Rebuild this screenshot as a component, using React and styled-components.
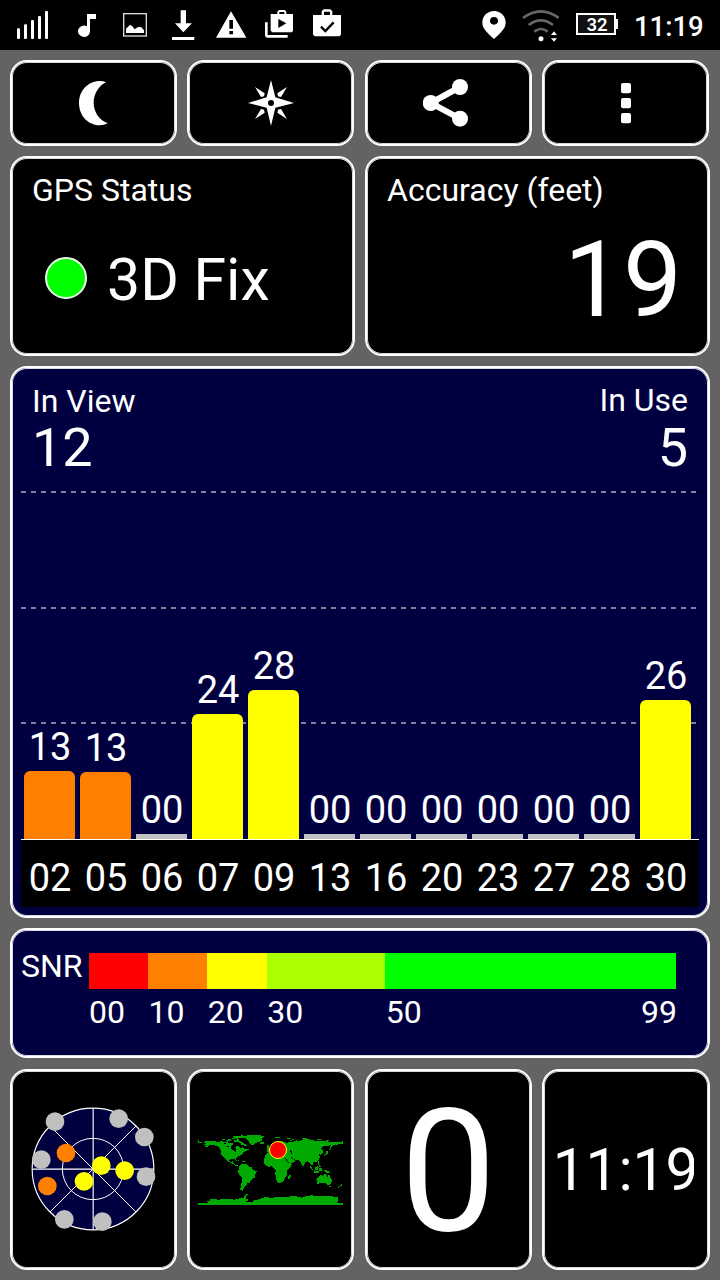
import React from "react";
import styled, { createGlobalStyle } from "styled-components";

const GlobalStyle = createGlobalStyle`
  *, *::before, *::after { box-sizing: border-box; }
  body {
    margin: 0;
    background: #636363;
    color: #fff;
    font-family: Roboto, "Liberation Sans", sans-serif;
  }
`;

const Screen = styled.div`
  display: flex;
  flex-direction: column;
  width: 720px;
  height: 1280px;
  overflow: hidden;
  background: #636363;
`;

/* ---------- status bar ---------- */

const StatusBar = styled.header`
  display: flex;
  height: 50px;
  padding-left: 17px;
  background: #000;
`;

const Glyph = styled.svg`
  flex: none;
  display: block;
  height: 50px;
  margin-left: ${(p) => p.$gap || 0}px;
  fill: #fff;
`;

/* Status glyphs are drawn on a grid of three units per pixel. */
function StatusIcon({ x, w, gap, children }) {
  return (
    <Glyph $gap={gap} width={w / 3} viewBox={`${x} 0 ${w} 150`}>
      {children}
    </Glyph>
  );
}

const Battery = styled.div`
  position: relative;
  width: 40px;
  height: 22px;
  margin: 13px 0 0 17px;
  border: 2px solid #fff;
  background: #111;
  font-size: 18.5px;
  font-weight: 600;
  line-height: 20px;
  text-align: center;
  padding-left: 2px;

  &::after {
    content: "";
    position: absolute;
    left: 38px;
    top: 4px;
    width: 2px;
    height: 10px;
    background: #fff;
  }
`;

const StatusClock = styled.span`
  margin-left: 18px;
  font-size: 27.5px;
  font-weight: 500;
  line-height: 53px;
`;

/* ---------- panels ---------- */

const Body = styled.main`
  display: flex;
  flex-direction: column;
  gap: 10px;
  padding: 10px 10px 0;
`;

const Panel = styled.section`
  border: 2px solid #fff;
  border-radius: 17px;
  background: ${(p) => (p.$navy ? "#000040" : "#000")};
  box-shadow: inset 0 0 0 1px rgba(255, 255, 255, 0.85);
`;

const QuadRow = styled.div`
  display: grid;
  grid-template-columns: 167px 167px 167px ${(p) => p.$last}px;
  column-gap: 10.4px;
  height: ${(p) => p.$height}px;
  margin-top: ${(p) => p.$top || 0}px;
`;

const Tile = styled(Panel)`
  display: flex;
  align-items: center;
  justify-content: center;
  overflow: hidden;
`;

const ToolIcon = styled.svg`
  display: block;
  width: 50px;
  height: 50px;
  fill: #fff;
`;

const HalfRow = styled.div`
  display: grid;
  grid-template-columns: 345px 345px;
  column-gap: 10px;
  height: 200px;
`;

const InfoPanel = styled(Panel)`
  padding: 13px 20px 0;
`;

const Label = styled.div`
  font-size: 32px;
  line-height: 38px;
  white-space: nowrap;
`;

const FixRow = styled.div`
  display: flex;
  gap: 20px;
  margin: 36px 0 0 13px;
  font-size: 59px;
  line-height: 70px;
`;

const FixDot = styled.i`
  width: 42px;
  height: 42px;
  margin-top: 12px;
  border: 2px solid #e9ffe9;
  border-radius: 50%;
  background: #0f0;
`;

const Accuracy = styled.div`
  padding-right: 6px;
  margin-top: 12px;
  font-size: 105px;
  line-height: 120px;
  text-align: right;
`;

/* ---------- satellite chart ---------- */

const ChartPanel = styled(Panel)`
  height: 552px;
  padding: 0 9px;
`;

const ChartHead = styled.div`
  display: flex;
  justify-content: space-between;
  height: 123px;
  padding: 14px 11px 0 11px;
`;

const Stat = styled.div`
  text-align: ${(p) => p.$align};
  margin-top: ${(p) => p.$shift || 0}px;
`;

const StatValue = styled.div`
  margin-top: ${(p) => p.$drop || 0}px;
  font-size: 54px;
  line-height: 56px;
`;

const Plot = styled.div`
  position: relative;
  display: flex;
  align-items: flex-end;
  gap: 5px;
  width: 678px;
  height: 349px;
  padding-left: 3px;
  border-bottom: 1px solid #fff;
`;

const GridLine = styled.div`
  position: absolute;
  left: 0;
  top: ${(p) => p.$top}px;
  width: 675px;
  height: 2px;
  background: repeating-linear-gradient(90deg, #8080a0 0 5px, transparent 5px 10px);
`;

const Satellite = styled.div`
  position: relative;
  width: 51px;
  font-size: 38px;
  line-height: 40px;
  text-align: center;
  padding-left: 1px;
`;

const Bar = styled.div`
  margin: 4px 0 0 -1px;
  height: ${(p) => p.$height}px;
  border-radius: ${(p) => (p.$height > 10 ? "6px 6px 0 0" : 0)};
  background: ${(p) => p.$color};
`;

const Ids = styled.div`
  display: flex;
  gap: 5px;
  width: 678px;
  height: 67px;
  padding-left: 3px;
  background: #000;
`;

const SatId = styled.span`
  width: 51px;
  padding-left: 1px;
  font-size: 38px;
  line-height: 76px;
  text-align: center;
`;

/* ---------- SNR scale ---------- */

const SnrPanel = styled(Panel)`
  display: flex;
  height: 130px;
  padding: 17px 0 0 9px;
`;

const SnrScale = styled.div`
  width: 587.5px;
  margin: 6px 0 0 6px;
`;

const Bands = styled.div`
  display: grid;
  grid-template-columns: 59.4px 59.4px 59.4px 118px 1fr;
  height: 36px;
`;

const Band = styled.div`
  background: ${(p) => p.$color};
`;

const Ticks = styled(Bands)`
  height: 46px;
  font-size: 32px;
  line-height: 46px;
`;

const Tick = styled.span`
  display: flex;
  justify-content: space-between;
  padding-left: ${(p) => p.$pad}px;
  margin-right: -1px;
`;

/* ---------- bottom tiles ---------- */

const SkyBox = styled.div`
  display: flex;
  margin: 0 1px 1px 0;
`;

const Speed = styled.span`
  margin-top: 5px;
  font-size: 171px;
  line-height: 196px;
`;

const ClockBox = styled.div`
  width: 141px;
  margin-left: -6px;
  overflow: hidden;
  font-size: 58.5px;
  line-height: 70px;
  white-space: nowrap;
`;

const SATELLITES = [
  { id: "02", snr: "13", height: 68, color: "#ff8000" },
  { id: "05", snr: "13", height: 67, color: "#ff8000" },
  { id: "06", snr: "00", height: 5, color: "#c0c0c0" },
  { id: "07", snr: "24", height: 125, color: "#ffff00" },
  { id: "09", snr: "28", height: 149, color: "#ffff00" },
  { id: "13", snr: "00", height: 5, color: "#c0c0c0" },
  { id: "16", snr: "00", height: 5, color: "#c0c0c0" },
  { id: "20", snr: "00", height: 5, color: "#c0c0c0" },
  { id: "23", snr: "00", height: 5, color: "#c0c0c0" },
  { id: "27", snr: "00", height: 5, color: "#c0c0c0" },
  { id: "28", snr: "00", height: 5, color: "#c0c0c0" },
  { id: "30", snr: "26", height: 139, color: "#ffff00" },
];

const SKY_DOTS = [
  [136, 96, "#c0c0c0"],
  [327, 87, "#c0c0c0"],
  [404, 142, "#c0c0c0"],
  [95, 210, "#c0c0c0"],
  [409, 261, "#c0c0c0"],
  [164, 389, "#c0c0c0"],
  [278, 396, "#c0c0c0"],
  [169, 190, "#ff8000"],
  [113, 289, "#ff8000"],
  [275, 228, "#ffff00"],
  [345, 243, "#ffff00"],
  [223, 275, "#ffff00"],
];

function SkyView() {
  return (
    <svg width="126" height="126" viewBox="61 49 378 378">
      <circle cx="250" cy="238" r="182.5" fill="#000040" stroke="#fff" strokeWidth="3.4" />
      <g fill="none" stroke="#fff" strokeWidth="3">
        <circle cx="250" cy="238" r="92" />
        <path d="M250.5 56V420M68 238.5H432" strokeWidth="3.4" />
        <path d="M121 367L379 109M121 109L379 367" strokeWidth="3" />
      </g>
      {SKY_DOTS.map(([cx, cy, fill]) => (
        <circle key={`${cx}-${cy}`} cx={cx} cy={cy} r="28" fill={fill} />
      ))}
    </svg>
  );
}

function WorldMap() {
  return (
    <svg width="145" height="70" viewBox="24 45 435 210">
      <g fill="#00aa00" shapeRendering="crispEdges">
        <path d="M24 60L28 62V65H36V69H24Z" />
        <path d="M42 67L48 63H60L66 62L82 65L96 64L112 67L120 70L128 68V75L122 80L125 88L132 91L137 97L139 90L136 84L138 78L148 80L152 86L158 82L166 88L176 86V90L166 94L160 97L158 103L150 107L144 110L138 116L141 123L137 122L133 117L122 116L117 120L120 126L128 124L130 130L137 134L144 137L138 138L126 130L115 126L110 121L100 112L94 104L93 94L88 84L82 77L70 76L60 74L52 80L42 81L50 76L42 73H47V69Z" />
        <path d="M96 56H106V60H96ZM108 60L122 57L124 62L112 65ZM126 54H134V58H126ZM120 51L140 48L157 46L160 49L150 52L142 57L132 52ZM136 59L148 58V63L156 65L166 73L172 78L164 80L158 74L150 76L154 71L142 66L132 67V62Z" />
        <path d="M142 52L160 48L180 45L212 46L222 49L216 56L217 63L208 65L198 68L191 75L187 76L180 71L176 64L170 56L158 53Z" />
        <path d="M210 67H221L223 70L218 73L210 70ZM140 120L150 122L155 124H148ZM156 124H164V127H156Z" />
        <path d="M148 137L156 132L170 133L178 140L186 143L188 148L200 153L198 160L194 166V173L184 179L180 187L172 190L169 197L163 200L164 205L158 207V212L151 209L152 198L155 186L156 172L149 165L144 155L147 148Z" />
        <path d="M228 102L236 99L258 98L264 104L284 108L289 121L297 132L306 133L302 142L292 152L291 165L285 174L280 185L270 189L262 187L258 174L256 161L257 152L252 144L246 139L234 140L226 134L221 127L222 118Z" />
        <path d="M302 164L304 168L298 178L294 176L295 168Z" />
        <path d="M232 97V91L240 90L237 84L244 80L256 74L254 68L264 64L274 62L284 66L292 69L296 65L305 66L314 64L318 61L329 64L340 58L352 56L365 60L380 63L396 62L410 64L430 66H446L459 64V71L451 73L438 74L426 78L423 87L418 91L419 82L424 76L412 77L398 80L393 86L400 91L399 99L393 104L386 102L390 110L387 119L379 125L368 126L369 135L363 136L359 129L353 122L345 128L341 137L336 137L332 125L325 121L312 118L316 124L305 130L297 133L291 124L286 112L282 107L268 105L258 98L244 98L238 102Z" />
        <path d="M232 76H238V84L242 89H232ZM256 51H270V54H256ZM292 54H302V57H292ZM300 62L309 57L316 56L304 63ZM336 53H351V57H336ZM382 56H392V59H382ZM408 59H416V62H408Z" />
        <path d="M411 90L414 98L411 104L402 108L406 102ZM384 124H388V134L394 140H388L384 132ZM359 137L366 144L372 151H367L360 143ZM372 151L388 155V158H372ZM374 144L383 137L387 143L382 151L376 150ZM388 145H396V153H388ZM400 149L412 152L423 159L410 158Z" />
        <path d="M379 176L386 172L392 166L400 167L404 162L410 164L413 171L417 162L421 172L426 180L424 190L417 196L410 193L404 188L393 189L383 192L380 186Z" />
        <path d="M454 192L456 196L450 200L444 205V201L450 198ZM417 198H422V201H417Z" />
        <path d="M24 255V249H54L50 243L58 243L62 237L88 239L108 236L132 239L148 235L160 234L168 223H174L167 230L170 237L178 240L168 245L184 247L194 241L210 237L222 232L250 233L266 230L294 231L308 227L325 230L334 233L348 228L366 226L390 229L420 228L443 232L445 244L440 248H459V255Z" />
      </g>
      <g fill="#000" shapeRendering="crispEdges">
        <path d="M299 89L304 91L307 101L303 102ZM284 114L287 113L296 128H293ZM302 109L311 116L308 118ZM102 70H108V73H102ZM112 77H118V80H112Z" />
      </g>
      <circle cx="264" cy="90" r="25.5" fill="#f00" stroke="#ff0" strokeWidth="3" />
    </svg>
  );
}

export default function App() {
  return (
    <Screen>
      <GlobalStyle />
      <StatusBar>
        <StatusIcon x={51} w={93}>
          <rect x="51" y="85" width="9" height="32" rx="3" />
          <rect x="72" y="73" width="9" height="44" rx="3" />
          <rect x="93" y="60" width="9" height="57" rx="3" />
          <rect x="114" y="48" width="9" height="69" rx="3" />
          <rect x="135" y="33" width="9" height="84" rx="3" />
        </StatusIcon>
        <StatusIcon x={234} w={54} gap={30}>
          <path d="M261 42H288V57H270V94A18 17 0 1 1 261 79Z" />
        </StatusIcon>
        <StatusIcon x={369} w={72} gap={27}>
          <rect x="371" y="41" width="68" height="67" fill="none" stroke="#ddd" strokeWidth="4" />
          <path d="M378 99V86L390 74L397 79L404 88L414 81L424 82L432 91V99Z" />
        </StatusIcon>
        <StatusIcon x={516} w={68} gap={25}>
          <path d="M542 31H558V70H576L550 97L525 70H542ZM516 111H583V120H516Z" />
        </StatusIcon>
        <StatusIcon x={647} w={91} gap={21}>
          <path fillRule="evenodd" d="M692 34L738 113H647ZM687 60V86H698V60ZM687 93V103H698V93Z" />
        </StatusIcon>
        <StatusIcon x={795} w={85} gap={19}>
          <path
            fillRule="evenodd"
            d="M812 42H832V35L837 30H854L859 35V42H880V92L875 97H817L812 92ZM838 42H853V36H838ZM835 57V84L859 70ZM795 67H803V105H863V113H800L795 108Z"
          />
        </StatusIcon>
        <StatusIcon x={939} w={85} gap={59 / 3}>
          <path
            fillRule="evenodd"
            d="M939 45H965V34L971 28H991L997 34V45H1023V104L1018 109H945L939 104ZM972 45H990V35H972Z"
          />
          <path d="M963 80L976 93L1001 67" fill="none" stroke="#000" strokeWidth="7" />
        </StatusIcon>
        <StatusIcon x={366} w={72} gap={421 / 3}>
          <path
            fillRule="evenodd"
            d="M402 33C382 33 367 48 367 68C367 87 384 99 402 117C420 99 437 87 437 68C437 48 422 33 402 33ZM402 51A12 11.5 0 1 1 402 74A12 11.5 0 1 1 402 51Z"
          />
        </StatusIcon>
        <StatusIcon x={486} w={112} gap={16}>
          <g fill="none" stroke="#666" strokeWidth="8">
            <path d="M489 54Q543 14 596 54" />
            <path d="M506 75Q543 47 579 75" />
            <path d="M523 95Q543 79 563 95" />
          </g>
          <circle cx="543" cy="116" r="7.5" />
          <path d="M582 94L591 105H573ZM573 115H591L582 125Z" />
        </StatusIcon>
        <Battery>32</Battery>
        <StatusClock>11:19</StatusClock>
      </StatusBar>

      <Body>
        <QuadRow $height={86} $last={167}>
          <Tile as="button">
            <ToolIcon viewBox="207 234 150 150">
              <path d="M300 243C264 243 237 272 237 309C237 347 264 376 300 376Q312 376 323 370C297 360 281 335 281 309C281 282 296 257 318 247Q310 243 300 243Z" />
            </ToolIcon>
          </Tile>
          <Tile as="button">
            <ToolIcon viewBox="738 234 150 150">
              <path
                fillRule="evenodd"
                d="M813 240L826 292L882 309L826 323L813 378L800 323L744 309L800 292ZM813 300A9 9 0 1 0 813 318A9 9 0 1 0 813 300Z"
              />
              <path d="M765 261L794 280L792 289L783 291ZM861 261L832 280L834 289L843 291ZM765 357L794 338L792 329L783 327ZM861 357L832 338L834 329L843 327Z" />
            </ToolIcon>
          </Tile>
          <Tile as="button">
            <ToolIcon viewBox="190 234 150 150">
              <path d="M301 261L213 309L301 356" fill="none" stroke="#fff" strokeWidth="18" />
              <circle cx="213" cy="309" r="24" />
              <circle cx="301" cy="261" r="24" />
              <circle cx="301" cy="356" r="24" />
            </ToolIcon>
          </Tile>
          <Tile as="button">
            <ToolIcon viewBox="723 234 150 150">
              <rect x="783" y="249" width="30" height="31" rx="6" />
              <rect x="783" y="294" width="30" height="31" rx="6" />
              <rect x="783" y="339" width="30" height="31" rx="6" />
            </ToolIcon>
          </Tile>
        </QuadRow>

        <HalfRow>
          <InfoPanel>
            <Label>GPS Status</Label>
            <FixRow>
              <FixDot />
              3D Fix
            </FixRow>
          </InfoPanel>
          <InfoPanel>
            <Label>Accuracy (feet)</Label>
            <Accuracy>19</Accuracy>
          </InfoPanel>
        </HalfRow>

        <ChartPanel $navy>
          <ChartHead>
            <Stat $align="left">
              <Label>In View</Label>
              <StatValue>12</StatValue>
            </Stat>
            <Stat $align="right" $shift={-1}>
              <Label>In Use</Label>
              <StatValue $drop={1}>5</StatValue>
            </Stat>
          </ChartHead>
          <Plot>
            <GridLine $top={0} />
            <GridLine $top={116} />
            <GridLine $top={231} />
            {SATELLITES.map((s) => (
              <Satellite key={s.id}>
                {s.snr}
                <Bar $height={s.height} $color={s.color} />
              </Satellite>
            ))}
          </Plot>
          <Ids>
            {SATELLITES.map((s) => (
              <SatId key={s.id}>{s.id}</SatId>
            ))}
          </Ids>
        </ChartPanel>

        <SnrPanel $navy>
          <Label>SNR</Label>
          <SnrScale>
            <Bands>
              <Band $color="#ff0000" />
              <Band $color="#ff8000" />
              <Band $color="#ffff00" />
              <Band $color="#aaff00" />
              <Band $color="#00ff00" />
            </Bands>
            <Ticks>
              <Tick $pad={0.5}>00</Tick>
              <Tick $pad={0.5}>10</Tick>
              <Tick $pad={0.5}>20</Tick>
              <Tick $pad={0.5}>30</Tick>
              <Tick $pad={1}>
                <span>50</span>
                <span>99</span>
              </Tick>
            </Ticks>
          </SnrScale>
        </SnrPanel>

        <QuadRow $height={201} $last={168} $top={1}>
          <Tile>
            <SkyBox>
              <SkyView />
            </SkyBox>
          </Tile>
          <Tile>
            <WorldMap />
          </Tile>
          <Tile>
            <Speed>0</Speed>
          </Tile>
          <Tile>
            <ClockBox>11:19</ClockBox>
          </Tile>
        </QuadRow>
      </Body>
    </Screen>
  );
}
